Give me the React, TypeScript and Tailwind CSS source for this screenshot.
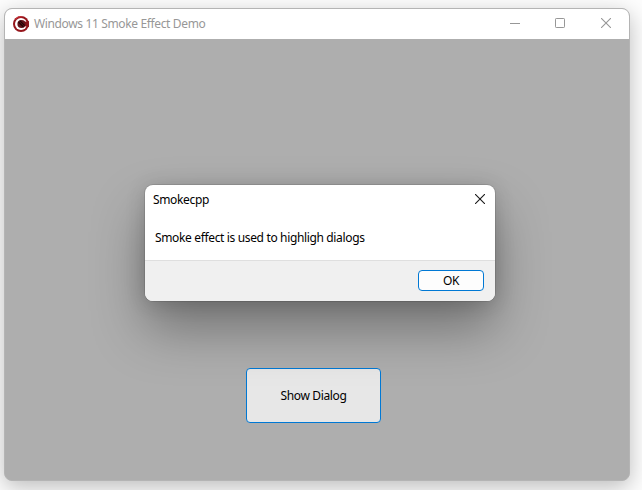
import React from 'react';

function AppLogo() {
  return (
    <svg width="16" height="16" viewBox="0 0 16 16" className="block shrink-0">
      <circle cx="8" cy="8" r="8" fill="#96161c" />
      <circle cx="8" cy="8" r="6" fill="#fff" />
      <path d="M10.5 6 16 5v6l-5.5-1z" fill="#8c151b" />
      <circle cx="8.5" cy="8" r="4.1" fill="#64131a" />
      <path d="M5.5 6l5 5M6.8 4.6l5 5" stroke="#1d0506" strokeWidth="1.1" />
      <path d="M2.2 3.3A7.4 7.4 0 0 1 9 .7" stroke="#cf343b" strokeWidth="1" fill="none" />
    </svg>
  );
}

function CloseIcon({ color }: { color: string }) {
  return (
    <svg width="10" height="10" viewBox="0 0 10 10" className="mb-[2px] block" fill="none" stroke={color} strokeWidth="1.1">
      <path d="M0 0l10 10M10 0L0 10" />
    </svg>
  );
}

function TitleBar() {
  return (
    <header className="flex h-[30px] shrink-0 items-center bg-white pl-2">
      <AppLogo />
      <span className="ml-[5px] whitespace-nowrap text-[12px] leading-4 tracking-[-0.36px] text-[#979797]">
        Windows 11 Smoke Effect Demo
      </span>
      <div className="ml-auto flex items-center pr-[18px]">
        <svg width="10" height="10" viewBox="0 0 10 10" className="mb-[2px] mr-[35px] block">
          <path d="M0 5h10v1H0z" fill="#979797" />
        </svg>
        <svg width="10" height="10" viewBox="0 0 10 10" className="mb-[2px] mr-9 block" fill="none" stroke="#979797">
          <rect x=".5" y=".5" width="9" height="9" rx=".7" />
        </svg>
        <CloseIcon color="#979797" />
      </div>
    </header>
  );
}

function Dialog() {
  return (
    <div
      role="dialog"
      className="absolute left-[145px] top-[185px] flex h-[116px] w-[350px] flex-col overflow-hidden rounded-[8px] bg-white text-[12px] leading-4 tracking-[-0.35px] text-black shadow-[0_0_0_1px_rgba(0,0,0,0.1),0_28px_52px_rgba(0,0,0,0.34),0_2px_20px_rgba(0,0,0,0.16)]"
    >
      <div className="flex h-[30px] shrink-0 items-center justify-between pl-2 pr-[10px]">
        <span>Smokecpp</span>
        <CloseIcon color="#1a1a1a" />
      </div>
      <p className="flex h-[45px] shrink-0 items-center whitespace-nowrap pl-[10px]">
        Smoke effect is used to highligh dialogs
      </p>
      <div className="flex flex-1 items-start justify-end border-t border-[#dfdfdf] bg-[#f0f0f0] pr-[11px] pt-[9px]">
        <button className="flex h-[21px] w-[66px] items-center justify-center rounded-[4px] border border-[#0078d4] bg-[#fdfdfd]">
          OK
        </button>
      </div>
    </div>
  );
}

export default function App() {
  return (
    <div className="relative h-[490px] w-[642px] overflow-hidden bg-[#fdfdfd] pl-1 pt-2 font-['Noto_Sans','Open_Sans',sans-serif]">
      <main className="flex h-[473px] w-[626px] flex-col overflow-hidden rounded-[8px] border border-[#b4b4b4] bg-[#aeaeae] shadow-[0_6px_22px_rgba(0,0,0,0.26)]">
        <TitleBar />
        <section className="flex flex-1 items-end justify-center pb-[57px] pr-[7px]">
          <button className="flex h-[55px] w-[135px] items-center justify-center rounded-[4px] border border-[#0078d4] bg-[#e7e7e7] text-[12px] leading-4 tracking-[-0.36px] text-black">
            Show Dialog
          </button>
        </section>
      </main>
      <Dialog />
    </div>
  );
}
